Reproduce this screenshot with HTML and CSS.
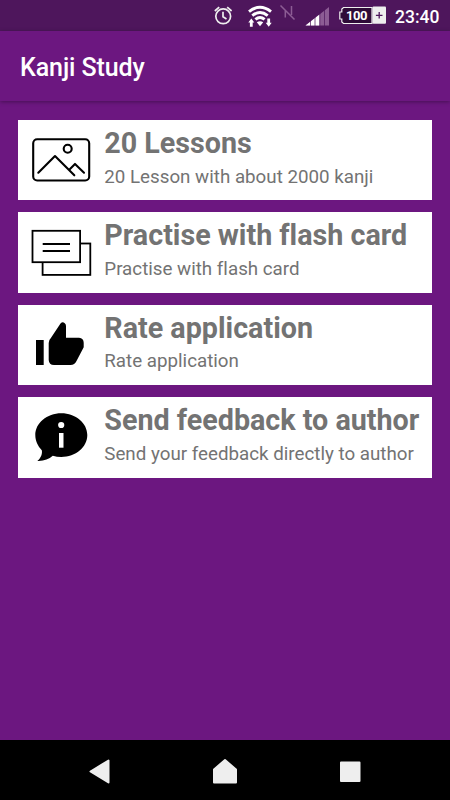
FILE: index.html
```
<!DOCTYPE html>
<html lang="en">
<head>
    <meta charset="UTF-8">
    <meta name="viewport" content="width=device-width, initial-scale=1.0">
    <title>Kanji Study</title>
    <link rel="stylesheet" href="styles.css">
</head>
<body>
    <div class="status-bar">
        <svg class="status-icons" width="186" height="31" viewBox="204 0 186 31">
            <!-- alarm -->
            <g fill="none" stroke="#eee" stroke-width="1.7">
                <circle cx="223.2" cy="16.3" r="7.4"/>
                <path d="M223 11.8v5l3.5 2.2M214.8 11l4.4-3.8M231.6 11l-4.4-3.8"/>
            </g>
            <!-- wifi with transfer arrows -->
            <g fill="none" stroke="#fff" stroke-width="3">
                <path d="M249 11.6Q260 3 271 11.6"/>
                <path d="M252.3 15.6Q260 9.4 267.7 15.6"/>
                <path d="M255.4 19.4Q260 15.6 264.6 19.4"/>
            </g>
            <path d="M256.8 22.3q3.2-2 6.4 0L260 26.3z" fill="#fff"/>
            <path d="M251.3 18.5l3 4h-1.6v4.2h-2.8v-4.2h-1.6zM268.7 26.7l3-4h-1.6v-4.2h-2.8v4.2h-1.6z" fill="#fff"/>
            <!-- nfc off -->
            <path d="M280.5 5.5l14 14M285.3 17.5v-7M291.5 6v9" fill="none" stroke="#8c5c94" stroke-width="1.5"/>
            <!-- signal -->
            <path d="M305.5 25.5L329 7v18.5z" fill="#8c5c94"/>
            <path d="M305.5 25.5l14-11v11z" fill="#fff"/>
            <path d="M310.5 15v11M315 12v14M319.8 9v17M324.5 8v18" stroke="#4e165c" stroke-width="0.7"/>
            <!-- battery -->
            <path d="M372 7.5H343.5l-1.7 1.5v3h-2v7h2v3l1.7 1.5H372z" fill="#2f0c38" stroke="#eee" stroke-width="1.2"/>
            <rect x="372.5" y="6.5" width="13.5" height="17.2" rx="1" fill="#eee"/>
            <path d="M379.2 12v6.6M375.9 15.3h6.6" stroke="#4e165c" stroke-width="1.3"/>
            <text class="battery-text" x="346" y="20" textLength="21.5">100</text>
        </svg>
        <span class="clock">23:40</span>
    </div>

    <div class="toolbar">
        <h1>Kanji Study</h1>
    </div>

    <div class="menu">
        <div class="card">
            <svg class="card-icon" viewBox="0 0 86 80">
                <g fill="none" stroke="#000" stroke-width="2.1" stroke-linecap="round" stroke-linejoin="round">
                    <rect x="15.2" y="19.3" width="56" height="41.2" rx="4"/>
                    <circle cx="49.7" cy="28.7" r="4"/>
                    <path d="M20.3 52.7L37 36l19.3 19.3M51.5 49.5l5.5-5.6 9 8.8"/>
                </g>
            </svg>
            <div class="card-text">
                <h2>20 Lessons</h2>
                <p>20 Lesson with about 2000 kanji</p>
            </div>
        </div>
        <div class="card">
            <svg class="card-icon" viewBox="0 0 86 80">
                <g fill="#fff" stroke="#000" stroke-width="1.8">
                    <rect x="24.6" y="31.5" width="47.7" height="31.4"/>
                    <rect x="14.5" y="18.8" width="47.6" height="31.4"/>
                    <path d="M24.7 32H52M24.7 39H52"/>
                </g>
            </svg>
            <div class="card-text">
                <h2>Practise with flash card</h2>
                <p>Practise with flash card</p>
            </div>
        </div>
        <div class="card">
            <svg class="card-icon" viewBox="0 0 86 80">
                <path d="M18 35h7.7v25H18zM30.7 38q0-3 2-4.7L42.5 18.5q2-2 4-.5 1.5 1 1.5 3V32.7h13q4.7.3 4.7 5v4.500L58.5 56q-1.8 4-6 4H36q-5 0-5.300-5z"/>
            </svg>
            <div class="card-text">
                <h2>Rate application</h2>
                <p>Rate application</p>
            </div>
        </div>
        <div class="card">
            <svg class="card-icon" viewBox="0 0 86 80">
                <path d="M43.3 16.2c14.4 0 26 9.8 26 21.9s-11.6 21.9-26 21.9c-3 0-5.8-.4-8.5-1.2-4 3.5-9 5.500-15.500 5.200 3.500-3 5.300-7 4.500-10.800-4-4-6.500-9.200-6.500-15.100 0-12.100 11.600-21.900 26-21.900z"/>
                <circle cx="43.2" cy="28" r="3.1" fill="#fff"/>
                <path d="M41 36h4.5v14.700H41z" fill="#fff"/>
            </svg>
            <div class="card-text">
                <h2>Send feedback to author</h2>
                <p>Send your feedback directly to author</p>
            </div>
        </div>
    </div>

    <div class="nav-bar">
        <svg viewBox="0 0 24 28"><path d="M2.500 15.500L20.500 4.500v22z"/></svg>
        <svg viewBox="0 0 24 28"><path d="M1 13.500L12 4l11 9.500v13H1z"/></svg>
        <svg viewBox="0 0 24 28"><path d="M3 6.500h18.500v18.500H3z"/></svg>
    </div>
</body>
</html>
```
FILE: styles.css
```
body {
    font-family: Roboto, sans-serif;
    font-variant-ligatures: none;
    margin: 0;
    height: 800px;
    background-color: #6c1780;
    display: flex;
    flex-direction: column;
    overflow: hidden;
}
h1, h2, p {
    margin: 0;
}
.status-bar {
    height: 31px;
    background-color: #4e165c;
    display: flex;
    justify-content: flex-end;
    padding-right: 10px;
}
.status-icons {
    margin-right: 5px;
}
.battery-text {
    font-size: 13px;
    font-weight: 700;
    fill: #fff;
}
.clock {
    width: 45px;
    font-size: 17.5px;
    font-weight: 500;
    line-height: 34px;
    color: #fff;
    white-space: nowrap;
}
.toolbar {
    height: 70px;
    padding-left: 20px;
    display: flex;
    align-items: center;
    box-shadow: 0 1px 4px rgba(0, 0, 0, 0.35);
}
.toolbar h1 {
    font-size: 25px;
    font-weight: 500;
    letter-spacing: -0.1px;
    padding-top: 2px;
    color: #fff;
}
.menu {
    flex: 1;
    display: flex;
    flex-direction: column;
    gap: 12.2px;
    padding: 19px 18.3px 0;
}
.card {
    height: 80.3px;
    display: flex;
    background-color: #fff;
}
.card-icon {
    width: 86px;
    height: 80px;
    flex: none;
}
.card-text {
    color: #737373;
    white-space: nowrap;
}
.card-text h2 {
    font-size: 28.7px;
    font-weight: 700;
    line-height: 34px;
    padding-top: 6px;
}
.card-text p {
    font-size: 18.75px;
    line-height: 22px;
    padding-top: 5.5px;
}
.nav-bar {
    height: 60px;
    background-color: #000;
    display: flex;
    justify-content: center;
    align-items: center;
    gap: 101px;
}
.nav-bar svg {
    width: 24px;
    height: 28px;
    fill: #eee;
    stroke: #eee;
    stroke-width: 2;
    stroke-linejoin: round;
}
```
